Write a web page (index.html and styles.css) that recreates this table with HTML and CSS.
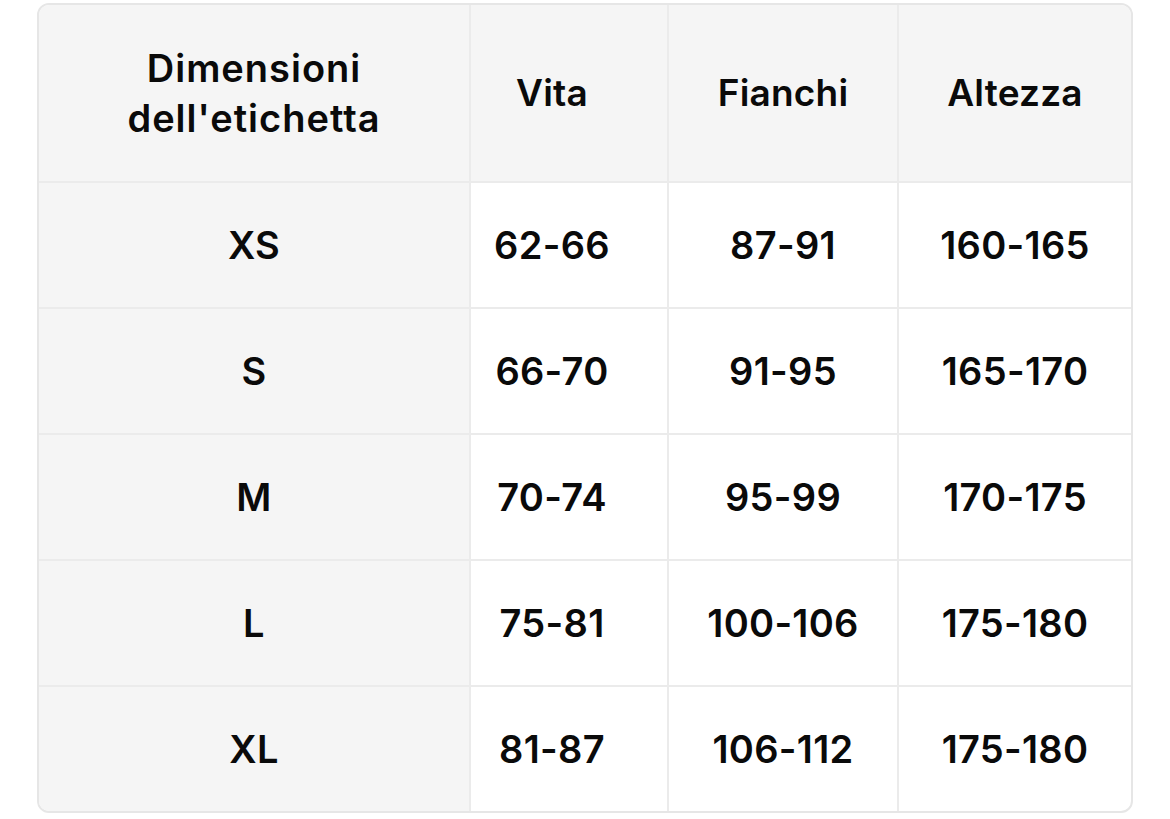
FILE: index.html
```html
<!DOCTYPE html>
<html lang="it">
<head>
<meta charset="utf-8">
<title>Tabella taglie</title>
<link rel="stylesheet" href="styles.css">
</head>
<body>
<div class="size-table">
  <div class="cell head label">Dimensioni<br>dell'etichetta</div>
  <div class="cell head waist">Vita</div>
  <div class="cell head">Fianchi</div>
  <div class="cell head last-col">Altezza</div>

  <div class="cell label">XS</div>
  <div class="cell waist">62-66</div>
  <div class="cell">87-91</div>
  <div class="cell last-col">160-165</div>

  <div class="cell label">S</div>
  <div class="cell waist">66-70</div>
  <div class="cell">91-95</div>
  <div class="cell last-col">165-170</div>

  <div class="cell label">M</div>
  <div class="cell waist">70-74</div>
  <div class="cell">95-99</div>
  <div class="cell last-col">170-175</div>

  <div class="cell label">L</div>
  <div class="cell waist">75-81</div>
  <div class="cell">100-106</div>
  <div class="cell last-col">175-180</div>

  <div class="cell label last-row">XL</div>
  <div class="cell waist last-row">81-87</div>
  <div class="cell last-row">106-112</div>
  <div class="cell last-row last-col">175-180</div>
</div>
</body>
</html>
```
FILE: styles.css
```css
html, body {
  margin: 0;
  padding: 0;
  background: #ffffff;
}
body {
  padding: 3px 0 0 37px;
  font-family: Inter, "Noto Sans", sans-serif;
  color: #0a0a0a;
}
.size-table {
  display: grid;
  grid-template-columns: 432px 198px 230px 232px;
  grid-template-rows: 178px repeat(4, 126px) 124px;
  width: 1092px;
  border: 2px solid #e6e6e6;
  border-radius: 12px;
  overflow: hidden;
  background: #ffffff;
}
.cell {
  display: flex;
  align-items: center;
  justify-content: center;
  text-align: center;
  border-right: 2px solid #ebebeb;
  border-bottom: 2px solid #ebebeb;
  font-size: 38px;
  font-weight: 600;
  letter-spacing: 0.3px;
  line-height: 50px;
}
.head {
  font-size: 37px;
  letter-spacing: 0.2px;
}
.head.label {
  font-size: 38px;
  letter-spacing: 1px;
}
.waist {
  padding-right: 34px;
}
.head, .label {
  background: #f5f5f5;
}
.last-col {
  border-right: none;
}
.last-row {
  border-bottom: none;
}
```
